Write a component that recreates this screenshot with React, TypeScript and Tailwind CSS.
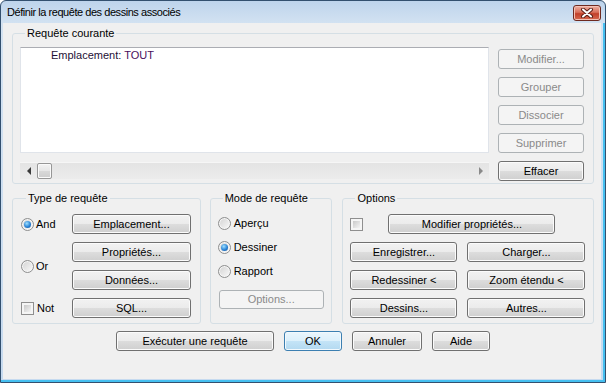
import type { ReactNode } from 'react'

type BtnKind = 'normal' | 'disabled' | 'primary'

const BTN_STYLES: Record<BtnKind, string> = {
  normal:
    'border-[#707070] text-black bg-[linear-gradient(#f2f2f2,#ebebeb_50%,#dddddd_50%,#cfcfcf)] shadow-[inset_0_0_0_1px_#fbfbfb]',
  disabled: 'border-[#adb2b5] text-[#8a8a8a] bg-[#f4f4f4]',
  primary:
    'border-[#3c7fb1] text-black bg-[linear-gradient(#eaf6fd,#dcf0fb_50%,#c4e4f7_50%,#b3d9f0)] shadow-[inset_0_0_0_1px_#f2f9fd]',
}

function Btn({ label, size, kind = 'normal' }: { label: string; size: string; kind?: BtnKind }) {
  return (
    <div
      className={`flex shrink-0 items-center justify-center rounded-[3px] border text-[11px] leading-[13px] ${size} ${BTN_STYLES[kind]}`}
    >
      {label}
    </div>
  )
}

function Radio({ checked = false }: { checked?: boolean }) {
  return (
    <span className="flex h-[13px] w-[13px] shrink-0 items-center justify-center rounded-full border border-[#8e8f8f] bg-[linear-gradient(135deg,#d2d2d2,#fafafa)] shadow-[inset_0_0_0_1px_#f6f6f6]">
      {checked && (
        <span className="h-[7px] w-[7px] rounded-full bg-[radial-gradient(circle_at_40%_35%,#9fe0ff,#2b84d6_55%,#0f4b92)]" />
      )}
    </span>
  )
}

function Check() {
  return (
    <span className="flex h-[13px] w-[13px] shrink-0 border border-[#8f8f8f] bg-[#f5f5f5] p-[2px]">
      <span className="block h-full w-full bg-[linear-gradient(135deg,#c9c9c9,#f4f4f4)]" />
    </span>
  )
}

function Group({ title, className, children }: { title: string; className: string; children: ReactNode }) {
  return (
    <fieldset className={`rounded-[3px] border border-[#d5dfe5] ${className}`}>
      <legend className="ml-[5px] px-[2px] text-[11px] leading-[13px]">{title}</legend>
      {children}
    </fieldset>
  )
}

export default function App() {
  return (
    <div className="flex h-[383px] w-[606px] flex-col overflow-hidden rounded-t-[6px] border border-[#33506f] bg-[linear-gradient(#bed4ec,#d4e3f2_24px,#c6daef)] font-['Liberation_Sans',Arial,sans-serif] text-black">
      {/* title bar */}
      <div className="flex h-[22px] shrink-0 items-center pl-[6px] pr-[4px]">
        <span className="text-[11px] tracking-[-0.45px] text-black">Définir la requête des dessins associés</span>
        <div className="ml-auto mt-[2px] flex h-[16px] w-[28px] items-center justify-center rounded-[3px] border border-[#6e2a20] bg-[linear-gradient(#eeb1a3,#d8705b_45%,#c2402a_55%,#d66a50)] shadow-[inset_0_0_0_1px_#f3c2b6]">
          <svg width="14" height="10" viewBox="0 0 14 10">
            <path d="M3 1.5 L11 8.5 M11 1.5 L3 8.5" stroke="#5b2018" strokeWidth="4" strokeLinecap="round" />
            <path d="M3 1.5 L11 8.5 M11 1.5 L3 8.5" stroke="#ffffff" strokeWidth="2" strokeLinecap="round" />
          </svg>
        </div>
      </div>

      <div className="flex flex-1 flex-col border-b-2 border-r-2 border-[#45bff0] pb-[1px] pl-[2px] pr-[2px]">
        <div className="flex flex-1 flex-col bg-[#f0f0f0] pl-[9px] pr-[7px] pt-[4px] text-[11px]">
          {/* Requête courante */}
          <Group title="Requête courante" className="pb-[2px] pl-[7px] pr-[8px] pt-[7px]">
            <div className="flex gap-[9px]">
              <div className="flex w-[469px] flex-col">
                <div className="h-[106px] border border-[#e0e4ea] border-t-[#abadb3] bg-white pl-[30px] pt-[1px] leading-[13px]">
                  <span className="text-[#1e1036]">Emplacement: </span>
                  <span className="text-[#4a0f5e]">TOUT</span>
                </div>
                <div className="mt-[9px] flex h-[17px] items-center border-t border-[#f6f6f6] bg-[linear-gradient(#e4e4e4,#ececec)]">
                  <div className="flex w-[17px] justify-center">
                    <span className="h-0 w-0 border-y-[4px] border-r-[4px] border-y-transparent border-r-[#3a3a3a]" />
                  </div>
                  <div className="h-[16px] w-[15px] rounded-[2px] border border-[#979797] bg-[linear-gradient(#f3f3f3,#e6e6e6_50%,#d9d9d9_50%,#cdcdcd)] shadow-[inset_0_0_0_1px_#fafafa]" />
                  <div className="flex-1" />
                  <div className="flex w-[17px] justify-center">
                    <span className="h-0 w-0 border-y-[4px] border-l-[4px] border-y-transparent border-l-[#8a8a8a]" />
                  </div>
                </div>
              </div>
              <div className="mt-[2px] flex flex-col gap-[8px]">
                <Btn label="Modifier..." size="h-[20px] w-[86px]" kind="disabled" />
                <Btn label="Grouper" size="h-[20px] w-[86px]" kind="disabled" />
                <Btn label="Dissocier" size="h-[20px] w-[86px]" kind="disabled" />
                <Btn label="Supprimer" size="h-[20px] w-[86px]" kind="disabled" />
                <Btn label="Effacer" size="h-[20px] w-[86px]" />
              </div>
            </div>
          </Group>

          <div className="mt-[8px] flex">
            {/* Type de requête */}
            <Group title="Type de requête" className="w-[189px] pb-[5px] pl-[8px] pt-[9px]">
              <div className="grid grid-cols-[51px_119px] grid-rows-[20px_20px_20px_20px] gap-y-[8px]">
                <div className="flex items-center">
                  <Radio checked />
                  <span className="ml-[2px] leading-[13px]">And</span>
                </div>
                <Btn label="Emplacement..." size="h-[20px] w-[119px]" />
                <div className="row-span-2 flex items-center pt-[1px]">
                  <Radio />
                  <span className="ml-[2px] leading-[13px]">Or</span>
                </div>
                <Btn label="Propriétés..." size="h-[20px] w-[119px]" />
                <Btn label="Données..." size="h-[20px] w-[119px]" />
                <div className="flex items-center">
                  <Check />
                  <span className="ml-[3px] leading-[13px]">Not</span>
                </div>
                <Btn label="SQL..." size="h-[20px] w-[119px]" />
              </div>
            </Group>

            {/* Mode de requête */}
            <Group title="Mode de requête" className="ml-[9px] w-[123px] pl-[7px] pt-[12px]">
              <div className="flex flex-col gap-[11px]">
                <div className="flex h-[13px] items-center">
                  <Radio />
                  <span className="ml-[3px] leading-[13px]">Aperçu</span>
                </div>
                <div className="flex h-[13px] items-center">
                  <Radio checked />
                  <span className="ml-[3px] leading-[13px]">Dessiner</span>
                </div>
                <div className="flex h-[13px] items-center">
                  <Radio />
                  <span className="ml-[3px] leading-[13px]">Rapport</span>
                </div>
              </div>
              <div className="ml-[1px] mt-[12px]">
                <Btn label="Options..." size="h-[19px] w-[105px]" kind="disabled" />
              </div>
            </Group>

            {/* Options */}
            <Group title="Options" className="ml-[10px] w-[252px] pl-[7px] pt-[9px]">
              <div className="flex h-[20px] items-center">
                <Check />
                <div className="ml-[25px]">
                  <Btn label="Modifier propriétés..." size="h-[20px] w-[167px]" />
                </div>
              </div>
              <div className="mt-[8px] grid grid-cols-[107px_118px] gap-x-[10px] gap-y-[8px]">
                <Btn label="Enregistrer..." size="h-[20px] w-[107px]" />
                <Btn label="Charger..." size="h-[20px] w-[118px]" />
                <Btn label="Redessiner <" size="h-[20px] w-[107px]" />
                <Btn label="Zoom étendu <" size="h-[20px] w-[118px]" />
                <Btn label="Dessins..." size="h-[20px] w-[107px]" />
                <Btn label="Autres..." size="h-[20px] w-[118px]" />
              </div>
            </Group>
          </div>

          <div className="mt-[7px] flex justify-center gap-[10px]">
            <Btn label="Exécuter une requête" size="h-[20px] w-[158px]" />
            <Btn label="OK" size="h-[20px] w-[58px]" kind="primary" />
            <Btn label="Annuler" size="h-[20px] w-[70px]" />
            <Btn label="Aide" size="h-[20px] w-[58px]" />
          </div>
        </div>
      </div>
    </div>
  )
}
